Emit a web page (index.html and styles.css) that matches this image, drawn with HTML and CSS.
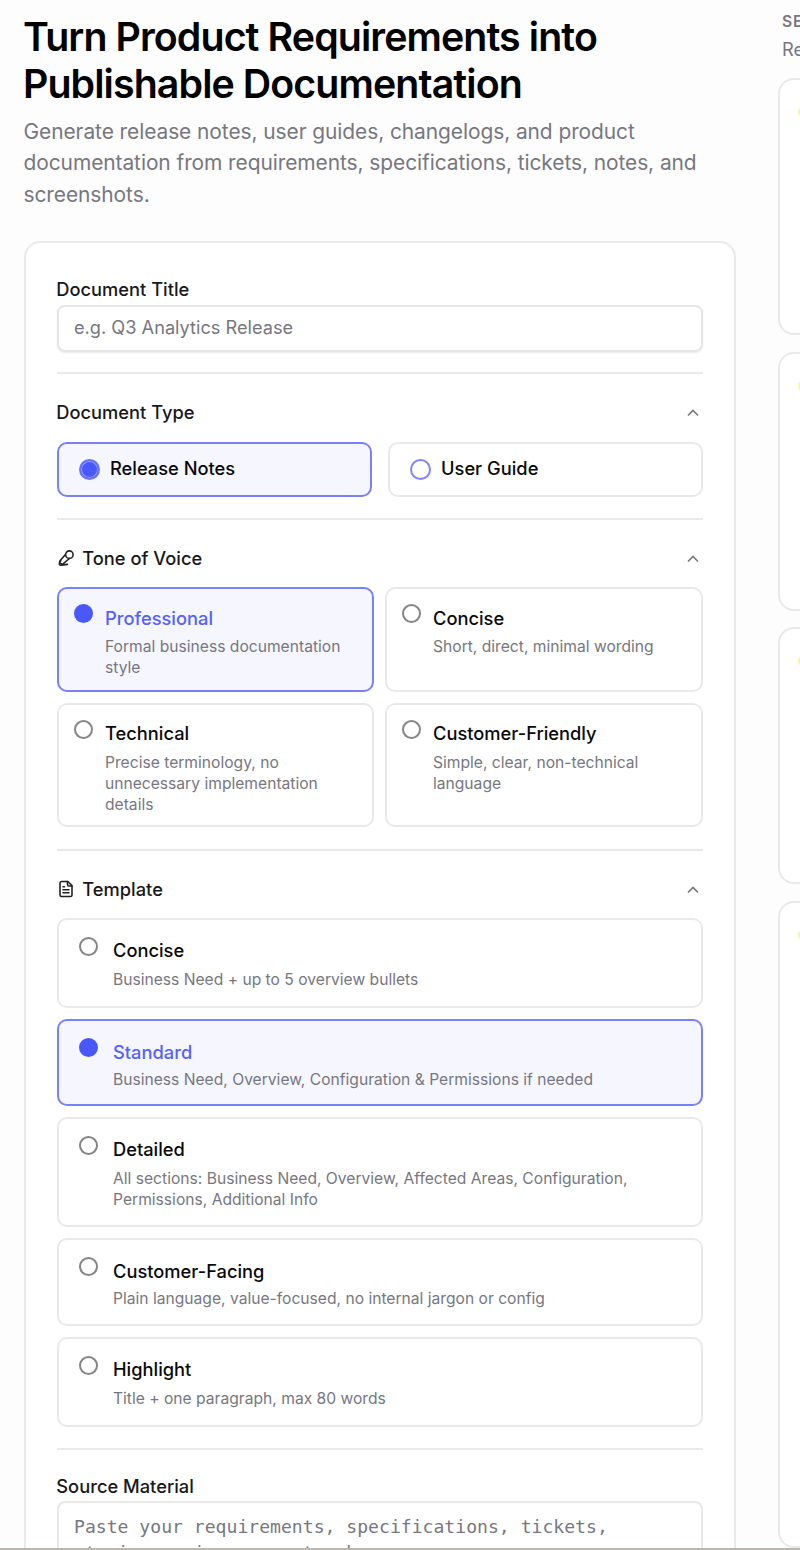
FILE: index.html
```html
<!DOCTYPE html>
<html lang="en">
<head>
<meta charset="utf-8">
<title>Document generator</title>
<link rel="stylesheet" href="styles.css">
</head>
<body>
<div class="page">
  <main class="main">
    <h1 class="title">Turn Product Requirements into<br>Publishable Documentation</h1>
    <p class="lead">Generate release notes, user guides, changelogs, and product<br>documentation from requirements, specifications, tickets, notes, and<br>screenshots.</p>
    <form class="panel">
      <section class="section s-title">
        <label class="label" for="doc-title">Document Title</label>
        <input class="input" id="doc-title" placeholder="e.g. Q3 Analytics Release">
      </section>
      <section class="section s-type">
        <div class="head"><span class="label">Document Type</span><svg class="chev" viewBox="0 0 14 14"><path d="M2 9.5 7 4.5l5 5"/></svg></div>
        <div class="types">
          <div class="type on"><i class="radio big filled"></i><span>Release Notes</span></div>
          <div class="type"><i class="radio big"></i><span>User Guide</span></div>
        </div>
      </section>
      <section class="section s-tone">
        <div class="head">
          <svg class="icon" viewBox="0 0 24 24"><path d="m11 7.6-6.700 7.700a3 3 0 0 0 4.200 4.200l7.900-6.800"/><circle cx="16.500" cy="7.500" r="5"/><path d="M5 15.500C3.300 17.300 2.800 19 3 20.500c.2 1 1.500 1.200 2.800 1L14 20.500"/></svg>
          <span class="label">Tone of Voice</span><svg class="chev" viewBox="0 0 14 14"><path d="M2 9.5 7 4.5l5 5"/></svg>
        </div>
        <div class="tones">
          <div class="option on"><i class="radio dot"></i><div class="copy"><b>Professional</b><p>Formal business documentation<br>style</p></div></div>
          <div class="option"><i class="radio"></i><div class="copy"><b>Concise</b><p>Short, direct, minimal wording</p></div></div>
          <div class="option low"><i class="radio"></i><div class="copy"><b>Technical</b><p>Precise terminology, no<br>unnecessary implementation<br>details</p></div></div>
          <div class="option low"><i class="radio"></i><div class="copy"><b>Customer-Friendly</b><p>Simple, clear, non-technical<br>language</p></div></div>
        </div>
      </section>
      <section class="section s-template">
        <div class="head">
          <svg class="icon" viewBox="0 0 24 24"><path d="M14.500 2H6a2 2 0 0 0-2 2v16a2 2 0 0 0 2 2h12a2 2 0 0 0 2-2V7.500Z"/><path d="M14 2v4a2 2 0 0 0 2 2h4M8 9h2M8 13h8M8 17h8"/></svg>
          <span class="label">Template</span><svg class="chev" viewBox="0 0 14 14"><path d="M2 9.5 7 4.5l5 5"/></svg>
        </div>
        <div class="templates">
          <div class="option low"><i class="radio"></i><div class="copy"><b>Concise</b><p>Business Need + up to 5 overview bullets</p></div></div>
          <div class="option on"><i class="radio dot"></i><div class="copy"><b>Standard</b><p>Business Need, Overview, Configuration &amp; Permissions if needed</p></div></div>
          <div class="option low"><i class="radio"></i><div class="copy"><b>Detailed</b><p>All sections: Business Need, Overview, Affected Areas, Configuration,<br>Permissions, Additional Info</p></div></div>
          <div class="option"><i class="radio"></i><div class="copy"><b>Customer-Facing</b><p>Plain language, value-focused, no internal jargon or config</p></div></div>
          <div class="option low"><i class="radio"></i><div class="copy"><b>Highlight</b><p>Title + one paragraph, max 80 words</p></div></div>
        </div>
      </section>
      <section class="section s-source">
        <span class="label">Source Material</span>
        <div class="source">Paste your requirements, specifications, tickets,<br>stories, epics, or notes here</div>
      </section>
    </form>
  </main>
  <aside class="side">
    <div class="side-title">SECTIONS</div>
    <div class="side-sub">Review</div>
    <div class="cards">
      <div class="card"><i class="spark"></i></div>
      <div class="card"><i class="spark"></i></div>
      <div class="card"><i class="spark"></i></div>
      <div class="card"><i class="spark"></i></div>
    </div>
  </aside>
</div>
</body>
</html>
```
FILE: styles.css
```css
* { box-sizing: border-box; }
body { margin: 0; background: #fdfdfd; color: #09090b; font-family: Inter, sans-serif; }
.page { width: 800px; height: 1550px; overflow: hidden; display: flex; border-bottom: 2px solid #bdb8ae; }
.main { width: 712px; margin-left: 24px; flex: none; padding-top: 13px; }
.title { margin: 0 0 0 -1px; font-size: 39.3px; line-height: 47px; font-weight: 600; letter-spacing: -0.9px; color: #000; white-space: nowrap; }
.lead { margin: 9px 0 0 -0.5px; font-size: 20.95px; letter-spacing: -0.08px; line-height: 31.3px; color: #777780; white-space: nowrap; }
.panel { margin-top: 31px; height: 1400px; border: 2px solid #e9e9ea; border-radius: 16px; background: #fff; padding: 0 31px; }
.section { border-bottom: 2px solid #e9e9ea; }
.label { margin-left: -0.7px; font-size: 18.3px; line-height: 26px; font-weight: 500; color: #18181b; white-space: nowrap; }
.s-title { height: 131px; padding-top: 33px; }
.s-title .label { display: block; height: 29px; }
.input { display: block; width: 100%; height: 47px; border: 2px solid #e6e6e7; border-radius: 8px; padding: 0 15px 2px; font: 18.2px Inter, sans-serif; background: #fff; outline: 0; box-shadow: 0 1px 2px rgba(0, 0, 0, .09); }
.input::placeholder { color: #777780; opacity: 1; }
.s-type { height: 146px; }
.s-tone { height: 331px; }
.s-template { height: 599px; }
.s-source { border: 0; padding-top: 23px; }
.head { display: flex; align-items: center; height: 68px; padding-top: 9px; }
.s-tone .head, .s-template .head { height: 67px; }
.chev { width: 14px; height: 14px; margin-left: auto; margin-right: 3px; fill: none; stroke: #777; stroke-width: 1.6; position: relative; top: 1px; }
.icon { width: 18px; height: 18px; margin-right: 8px; fill: none; stroke: #222; stroke-width: 2.1; stroke-linecap: round; stroke-linejoin: round; }
.types { display: grid; grid-template-columns: 1fr 1fr; gap: 16px; }
.type { height: 55px; border: 2px solid #e9e9ea; border-radius: 10px; display: flex; align-items: center; gap: 10px; padding: 0 0 2px 20px; font-size: 18.3px; font-weight: 500; }
.type.on, .option.on { background: #f5f6ff; border-color: #7a80f8; }
.radio { display: block; flex: none; width: 19px; height: 19px; border: 2px solid #858585; border-radius: 50%; }
.radio.big { width: 21px; height: 21px; border: 2px solid #7f86ff; margin-top: 2px; }
.radio.filled { border-color: #6873fa; background: #4858fa; box-shadow: inset 0 0 0 1px #98a0fc; }
.radio.dot { background: #4858fa; border-color: #4858fa; }
.tones { display: grid; grid-template-columns: 317px 318px; grid-template-rows: 105px 124px; gap: 11px; }
.option { border: 2px solid #e9e9ea; border-radius: 10px; display: flex; padding: 15px 0 0 15px; gap: 12px; }
.copy { padding-top: 2px; white-space: nowrap; }
.copy b { display: block; font-size: 18.3px; line-height: 24px; font-weight: 500; margin-bottom: 6px; }
.copy p { margin: 0; font-size: 15.63px; line-height: 21px; color: #777780; }
.low .copy { padding-top: 1px; }
.low .copy b { margin-bottom: 7px; }
.on .copy b { color: #5661fb; }
.templates { display: grid; grid-template-rows: 90px 87.5px 110px 88px 89.5px; gap: 11px; }
.templates .option { padding-left: 20px; gap: 15px; padding-top: 17px; }
.templates .option:not(.low) .copy b { margin-bottom: 5px; }
.source { margin-top: 2px; height: 90px; border: 2px solid #e9e9ea; border-radius: 8px; padding: 11px 15px; font: 18.1px/26px "DejaVu Sans Mono", monospace; color: #777780; white-space: nowrap; }
.side { width: 300px; margin-left: 42px; padding-top: 11px; flex: none; color: #777780; }
.side-title { margin-left: 4px; font-size: 15.7px; line-height: 21px; font-weight: 600; letter-spacing: .8px; }
.side-sub { margin-left: 4px; margin-top: 5px; font-size: 18.3px; line-height: 24px; }
.cards { margin-top: 17px; display: grid; grid-template-rows: 257px 259px 257px 647px; gap: 16.5px; }
.card { border: 2px solid #e9e9ea; border-radius: 16px; background: #fff; padding: 27px 0 0 18px; }
.spark { display: block; width: 8px; height: 10px; border-radius: 50%; background: #fff3a0; }
```
